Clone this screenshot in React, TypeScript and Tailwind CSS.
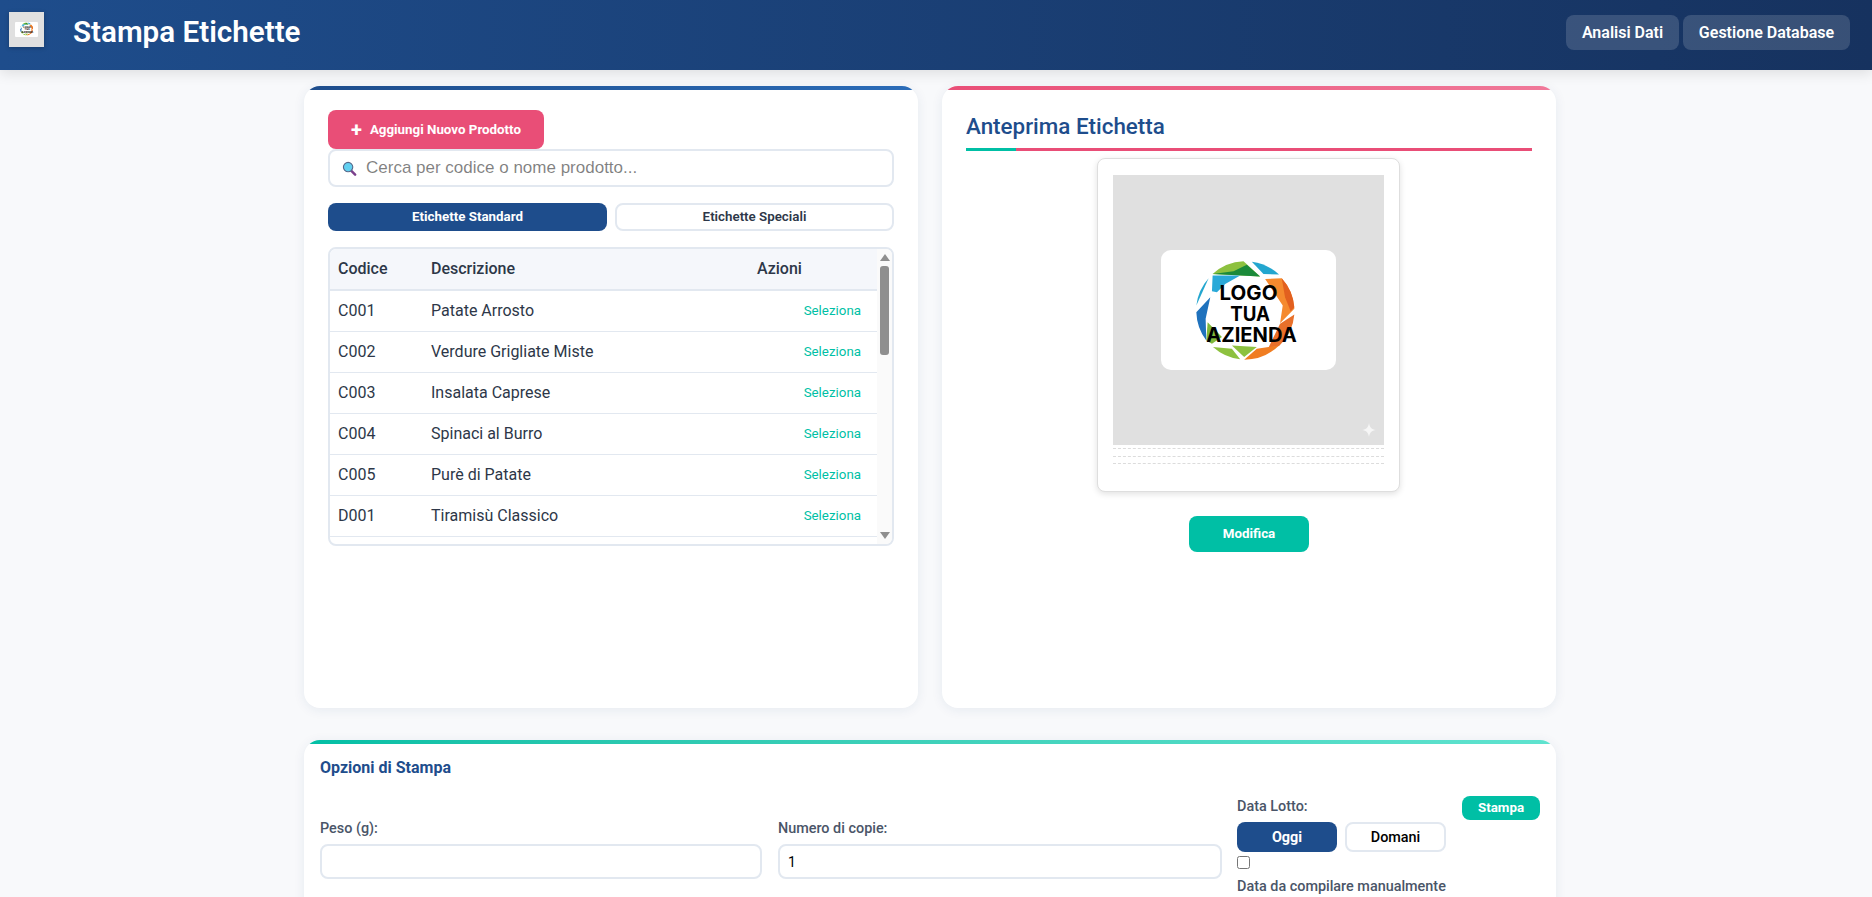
const prodotti = [
  ["C001", "Patate Arrosto"],
  ["C002", "Verdure Grigliate Miste"],
  ["C003", "Insalata Caprese"],
  ["C004", "Spinaci al Burro"],
  ["C005", "Purè di Patate"],
  ["D001", "Tiramisù Classico"],
];

const segmenti: [string, string][] = [
  ["#8dc13f", "M337 100 A148 148 0 0 1 430 62 L480 108 Z"],
  ["#1b8a3a", "M337 100 L400 92 L440 72 L480 108 Z"],
  ["#23a6cf", "M455 63 A148 148 0 0 1 537 102 L490 100 Z"],
  ["#f58a2e", "M545 113 A148 148 0 0 1 583 205 L540 248 L548 195 L495 115 Z"],
  ["#e2601f", "M545 113 A148 148 0 0 1 583 200 L572 212 L555 170 Z"],
  ["#e8702a", "M583 222 A148 148 0 0 1 537 317 L505 322 L540 250 Z"],
  ["#f07d22", "M537 315 A148 148 0 0 1 432 358 L470 325 Z"],
  ["#8dc13f", "M395 315 L470 320 L432 350 Z"],
  ["#8dc13f", "M338 320 L395 325 L420 357 A148 148 0 0 1 338 320 Z"],
  ["#7fb83a", "M322 245 L365 290 L335 310 L318 300 Z"],
  ["#1f72bd", "M330 170 L288 215 A148 148 0 0 0 318 300 L316 235 Z"],
  ["#23a6cf", "M325 113 L288 195 A148 148 0 0 1 325 113 Z"],
  ["#2aa9d8", "M337 105 L420 105 L375 130 L350 155 L335 152 Z"],
];

function Logo({ className }: { className: string }) {
  return (
    <svg viewBox="285 55 320 310" className={className}>
      {segmenti.map(([colore, d], i) => (
        <path key={i} fill={colore} d={d} />
      ))}
      <g fontFamily="Inter, sans-serif" fontWeight="700" fontSize="60" textAnchor="middle" fill="#000" lengthAdjust="spacingAndGlyphs">
        <text x="445" y="178" textLength="174" lengthAdjust="spacingAndGlyphs">LOGO</text>
        <text x="450" y="241" textLength="120" lengthAdjust="spacingAndGlyphs">TUA</text>
        <text x="454" y="305" textLength="272" lengthAdjust="spacingAndGlyphs">AZIENDA</text>
      </g>
    </svg>
  );
}

function Card({ strip, children }: { strip: string; children: React.ReactNode }) {
  return (
    <section className="relative overflow-hidden rounded-2xl bg-white shadow-[0_2px_12px_rgba(30,60,110,0.08)]">
      <div className={`h-1 ${strip}`} />
      {children}
    </section>
  );
}

export default function App() {
  return (
    <div className="h-screen overflow-hidden bg-[#f8f9fb] font-['Roboto',sans-serif]">
      <header className="flex h-[70px] items-center justify-between bg-gradient-to-r from-[#1e4d8c] to-[#16325f] pb-[5px] pl-[9px] pr-[22px] shadow-[0_4px_12px_rgba(0,0,0,0.1)]">
        <div className="flex items-center gap-[29px]">
          <div className="mb-[6px] flex h-[35px] w-[35px] items-center justify-center bg-[#e0e0e0] shadow-[0_1px_4px_rgba(0,0,0,0.25)]">
            <div className="flex h-[15px] w-[23px] items-center justify-center rounded-[1px] bg-white">
              <Logo className="h-[14px] w-[14px]" />
            </div>
          </div>
          <h1 className="text-[29.6px] font-semibold text-white">Stampa Etichette</h1>
        </div>
        <nav className="flex gap-1">
          <button className="h-[35px] w-[113px] rounded-lg bg-white/15 text-base font-semibold text-white">Analisi Dati</button>
          <button className="h-[35px] w-[167px] rounded-lg bg-white/15 text-base font-semibold text-white">Gestione Database</button>
        </nav>
      </header>

      <main className="ml-[304px] w-[1252px] pt-4">
        <div className="grid h-[622px] grid-cols-2 gap-6">
          <Card strip="bg-gradient-to-r from-[#1e4d8c] to-[#2b6cb8]">
            <div className="px-6 pt-5">
              <button className="flex h-[39px] w-[216px] items-center justify-center gap-2 rounded-lg bg-[#e94e77] text-[13.33px] font-bold text-white">
                <span className="text-xl leading-none">+</span>
                Aggiungi Nuovo Prodotto
              </button>
              <div className="relative">
                <svg viewBox="0 0 16 16" className="absolute left-[14px] top-[12px] h-[15px] w-[15px]">
                  <path d="M9.5 10 L14 14.5" stroke="#7b3f8c" strokeWidth="2.6" strokeLinecap="round" />
                  <circle cx="6.5" cy="6.5" r="5" fill="#62d0f0" stroke="#56688a" strokeWidth="1.2" />
                </svg>
                <input
                  placeholder="Cerca per codice o nome prodotto..."
                  className="h-[38px] w-full rounded-lg border-2 border-[#e2e8f0] pl-9 pr-3 font-['Liberation_Sans',sans-serif] text-[17px] outline-none"
                />
              </div>
              <div className="mt-4 grid grid-cols-2 gap-2">
                <button className="h-7 rounded-lg bg-[#1e4d8c] text-[13.33px] font-bold text-white">Etichette Standard</button>
                <button className="h-7 rounded-lg border-2 border-[#e2e8f0] bg-white text-[13.33px] font-semibold text-[#2d3748]">Etichette Speciali</button>
              </div>
              <div className="mt-4 flex h-[299px] overflow-hidden rounded-lg border-2 border-[#e2e8f0]">
                <table className="h-fit flex-1 table-fixed border-collapse text-left">
                  <colgroup>
                    <col className="w-[93px]" />
                    <col className="w-[326px]" />
                    <col />
                  </colgroup>
                  <thead>
                    <tr className="h-[41px] border-b-2 border-[#e2e8f0] bg-[#f5f7fb] text-base font-medium text-[#2d3748]">
                      <th className="pl-2 pb-px font-medium">Codice</th>
                      <th className="pl-2 pb-px font-medium">Descrizione</th>
                      <th className="pl-2 pb-px font-medium">Azioni</th>
                    </tr>
                  </thead>
                  <tbody>
                    {prodotti.map(([codice, nome]) => (
                      <tr key={codice} className="h-[41px] border-b border-[#e2e8f0] text-base text-[#2d3748]">
                        <td className="pl-2">{codice}</td>
                        <td className="pl-2">{nome}</td>
                        <td className="pr-[16px] text-right text-[13.33px] text-[#00bfa5]">Seleziona</td>
                      </tr>
                    ))}
                  </tbody>
                </table>
                <div className="flex w-[15px] flex-col items-center bg-[#fafafa]">
                  <svg viewBox="0 0 10 7" className="mt-[5px] h-[7px] w-[10px] fill-[#8f8f8f]">
                    <path d="M5 0 L10 7 H0 Z" />
                  </svg>
                  <div className="mt-[5px] h-[89px] w-[9px] rounded-[3px] bg-[#8f8f8f]" />
                  <svg viewBox="0 0 10 7" className="mb-[5px] mt-auto h-[7px] w-[10px] fill-[#8f8f8f]">
                    <path d="M0 0 H10 L5 7 Z" />
                  </svg>
                </div>
              </div>
            </div>
          </Card>

          <Card strip="bg-gradient-to-r from-[#e94e77] to-[#f0799a]">
            <div className="flex flex-col items-center px-6 pt-[19px]">
              <h2 className="w-full text-[22.4px] font-medium leading-[35px] text-[#1e4d8c]">Anteprima Etichetta</h2>
              <div className="mt-1 flex h-[3px] w-full bg-[#e94e77]">
                <div className="w-[50px] bg-[#00bfa5]" />
              </div>
              <div className="mr-[1px] mt-[7px] h-[334px] w-[303px] rounded-lg border border-[#dedede] bg-white px-[15px] pt-[16px] shadow-[0_2px_6px_rgba(0,0,0,0.12)]">
                <div className="relative flex h-[270px] items-center justify-center bg-[#e0e0e0]">
                  <div className="flex h-[120px] w-[175px] items-center justify-center rounded-[10px] bg-white">
                    <Logo className="h-[103px] w-[107px]" />
                  </div>
                  <svg viewBox="0 0 16 16" className="absolute bottom-[8px] right-[8px] h-[14px] w-[14px] fill-white/70">
                    <path d="M8 0 C8.8 5 11 7.2 16 8 C11 8.8 8.8 11 8 16 C7.2 11 5 8.8 0 8 C5 7.2 7.2 5 8 0 Z" />
                  </svg>
                </div>
                <div className="mt-[3px] border-t border-dashed border-[#dcdcdc]" />
                <div className="mt-[7px] border-t border-dashed border-[#dcdcdc]" />
                <div className="mt-[6px] border-t border-dashed border-[#dcdcdc]" />
              </div>
              <button className="mt-6 h-9 w-[120px] rounded-lg bg-[#00bfa5] text-[13.33px] font-bold text-white">Modifica</button>
            </div>
          </Card>
        </div>

        <div className="mt-8">
          <Card strip="bg-gradient-to-r from-[#00bfa5] to-[#5fe3cf]">
            <div className="px-4 pb-6 pt-[14px]">
              <h3 className="text-base font-bold leading-[19px] text-[#1e4d8c]">Opzioni di Stampa</h3>
              <div className="flex items-start">
                <label className="mt-[43px] block w-[442px] text-[14.4px] font-medium leading-[17px] text-[#4a5568]">
                  Peso (g):
                  <input className="mt-[7px] block h-[35px] w-full rounded-lg border-2 border-[#e2e8f0] px-2 text-sm font-normal text-black outline-none" />
                </label>
                <label className="ml-4 mt-[43px] block w-[444px] text-[14.4px] font-medium leading-[17px] text-[#4a5568]">
                  Numero di copie:
                  <input defaultValue="1" className="mt-[7px] block h-[35px] w-full rounded-lg border-2 border-[#e2e8f0] px-2 text-sm font-normal text-black outline-none" />
                </label>
                <div className="ml-[15px] mt-[21px] w-[209px] text-[14.4px] font-medium leading-[17px] text-[#4a5568]">
                  <span>Data Lotto:</span>
                  <div className="mt-[7px] flex gap-2">
                    <button className="h-[30px] w-[100px] rounded-lg bg-[#1e4d8c] text-[14.4px] font-bold text-white">Oggi</button>
                    <button className="h-[30px] w-[101px] rounded-lg border-2 border-[#e2e8f0] bg-white text-[14.4px] font-medium text-black">Domani</button>
                  </div>
                  <input type="checkbox" className="mt-1 block h-[13px] w-[13px]" />
                  <span className="mt-[9px] block whitespace-nowrap">Data da compilare manualmente</span>
                </div>
                <button className="ml-4 mt-[19px] h-6 w-[78px] rounded-lg bg-[#00bfa5] text-[13.33px] font-bold text-white">Stampa</button>
              </div>
            </div>
          </Card>
        </div>
      </main>
    </div>
  );
}
